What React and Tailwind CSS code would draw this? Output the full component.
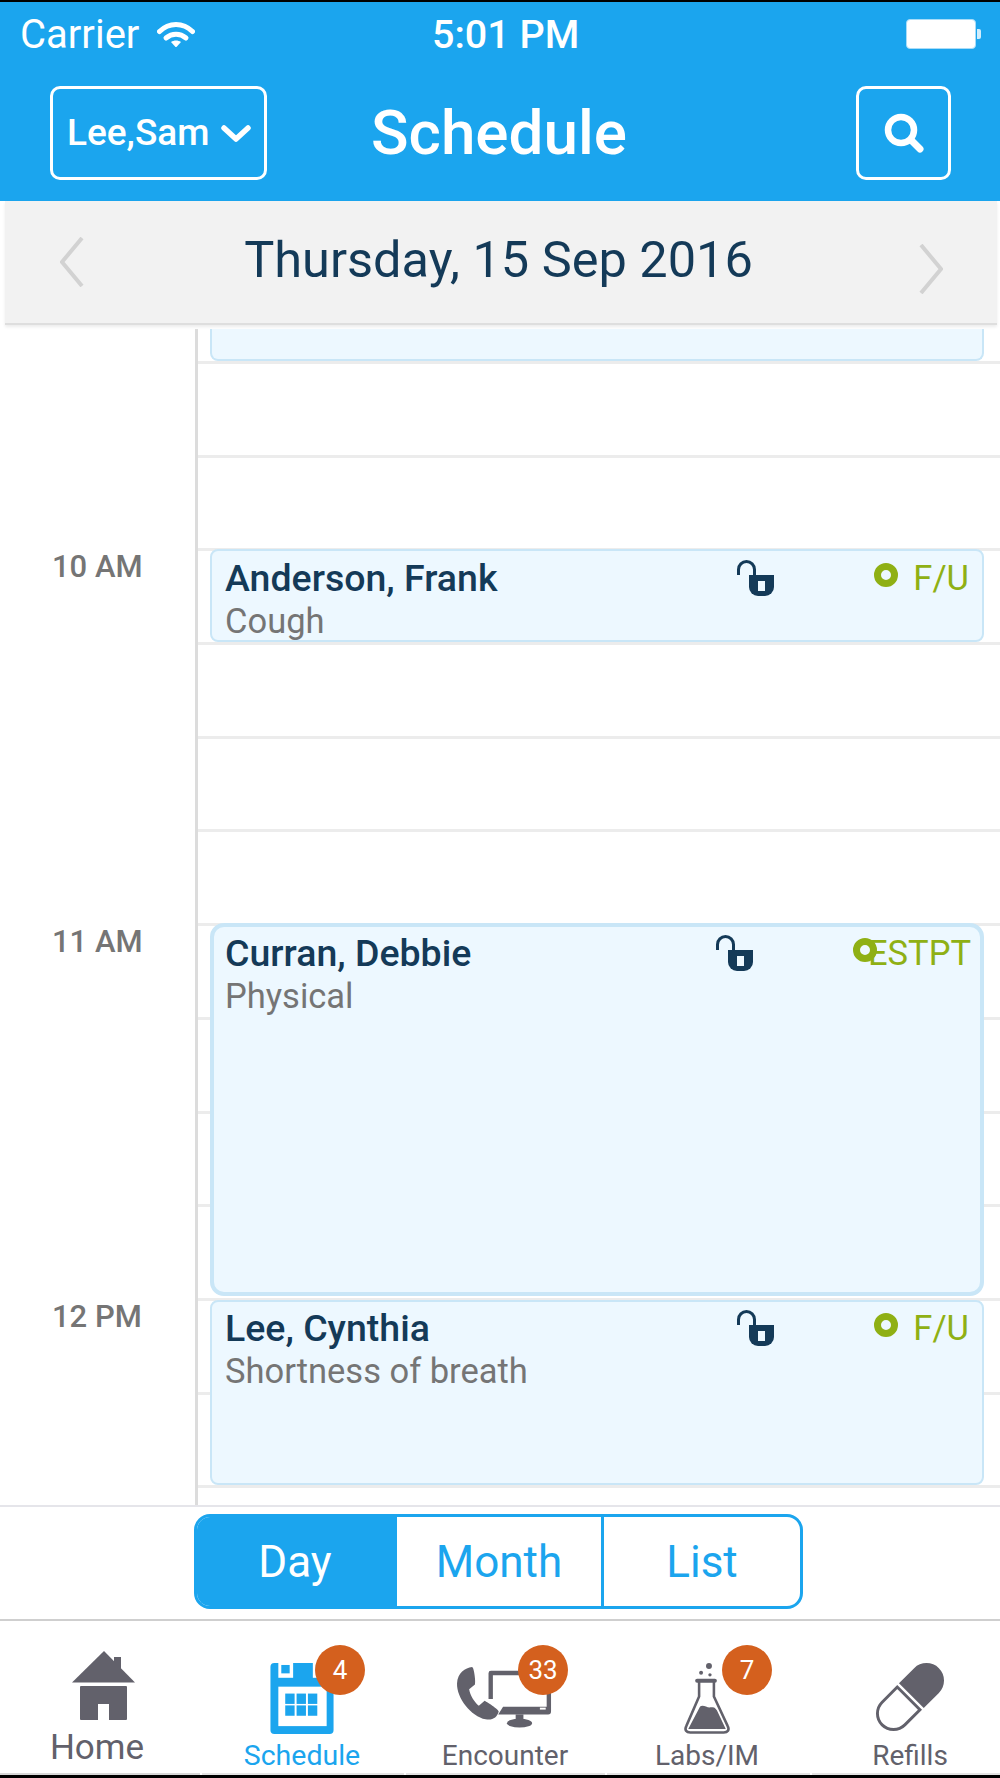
import React from "react";

const GRAY = "#62616b";

function Wifi() {
  return (
    <svg viewBox="157 18 38 28" className="w-[38px] h-[28px] ml-[18px] -mt-[4px]" fill="none">
      <path d="M159.5 30.5C169 21 183 21 192.5 30.5" stroke="#fff" strokeWidth="5" strokeLinecap="round" />
      <path d="M166 37C172 32 180 32 186 37" stroke="#fff" strokeWidth="5" strokeLinecap="round" />
      <path d="M171 41C174 39 178 39 181 41L176 46.5Z" fill="#fff" />
    </svg>
  );
}

function Lock() {
  return (
    <svg viewBox="0 0 37 36" className="w-[37px] h-[36px] shrink-0">
      <path d="M1.5 15V9.5a8 8 0 0 1 16 0V15" fill="none" stroke="#143a58" strokeWidth="3" />
      <path d="M12 15H37V27a9 9 0 0 1-9 9H21a9 9 0 0 1-9-9Z" fill="#143a58" />
      <rect x="21" y="21" width="7" height="10" fill="#edf8ff" />
    </svg>
  );
}

function Card({ name, reason, tag, dotClass, className }) {
  return (
    <div className={"bg-[#edf8ff] border-[#c9e6f7] flex justify-between " + className}>
      <div className="flex flex-col pt-[1px]">
        <div className="text-[#143a58] text-[37.5px] leading-[40px] font-medium">{name}</div>
        <div className="text-[#757575] text-[34.5px] leading-[42px] mt-[2px]">{reason}</div>
      </div>
      <div className="flex items-start">
        <div className="mt-[3px]"><Lock /></div>
        <div className={"ml-[100px] mt-[6px] w-[24px] h-[24px] rounded-full border-[7px] border-[#8fb014] shrink-0 " + dotClass} />
        <div className="text-[#8fb014] text-[34.5px] leading-[40px] mt-[1px] relative">{tag}</div>
      </div>
    </div>
  );
}

function Time({ children }) {
  return (
    <div className="h-[375px] pl-[52px] pt-[1px] text-[#757575] text-[31px] leading-[34px] font-medium">{children}</div>
  );
}

function Badge({ children, className }) {
  return (
    <div className={"absolute top-[24px] w-[50px] h-[50px] rounded-full bg-[#d4601e] text-white text-[26px] flex items-center justify-center " + className}>
      {children}
    </div>
  );
}

function Home() {
  return (
    <svg viewBox="71 1651 63 69" className="w-[63px] h-[69px] ml-[12px]">
      <path d="M103 1651L134 1682.5H71Z" fill={GRAY} />
      <rect x="113" y="1657" width="7" height="14" fill={GRAY} />
      <path d="M80 1686H125a1 1 0 0 1 1 1V1719a1 1 0 0 1-1 1H108V1704H97V1720H80a1 1 0 0 1-1-1V1687a1 1 0 0 1 1-1Z" fill={GRAY} />
    </svg>
  );
}

function CalendarIcon() {
  const c = "#1ba5ee";
  return (
    <svg viewBox="269 1663 64 72" className="w-[64px] h-[72px]">
      <rect x="269" y="1663" width="64" height="72" rx="4" fill={c} />
      <rect x="277" y="1663" width="15" height="15" fill="#fff" />
      <rect x="280" y="1665" width="8.5" height="8.5" fill={c} />
      <rect x="312" y="1663" width="15" height="15" fill="#fff" />
      <rect x="315" y="1665" width="8.5" height="8.5" fill={c} />
      <rect x="277" y="1687" width="49" height="40" fill="#fff" />
      {[284, 295.5, 307].map((x) =>
        [1694, 1706].map((y) => <rect key={x + "-" + y} x={x} y={y} width="9.5" height="10.5" fill={c} />)
      )}
    </svg>
  );
}

function EncounterIcon() {
  return (
    <svg viewBox="455 1665 100 65" className="w-[100px] h-[65px]">
      <path d="M471 1667C464 1668 456 1673 455.5 1684C455 1699 470 1718 485 1721C492 1722.5 497 1719 498.5 1713C498.5 1711 486 1703 484 1702L478 1707C473 1703 469 1696 468 1690L474 1685C475 1682 473 1667 471 1667Z" fill={GRAY} />
      <path d="M488 1700V1673.5a2.5 2.5 0 0 1 2.5-2.5H530V1675.5H492.5V1700Z" fill={GRAY} />
      <path d="M503 1708H548V1692H552.5V1713a3 3 0 0 1-3 3H498Z" fill={GRAY} />
      <rect x="541" y="1709" width="6" height="2" fill="#fff" />
      <rect x="516" y="1716" width="8" height="7" fill={GRAY} />
      <ellipse cx="520" cy="1725" rx="13" ry="4.5" fill={GRAY} />
    </svg>
  );
}

function Flask() {
  return (
    <svg viewBox="682 1660 50 76" className="w-[50px] h-[76px]">
      <circle cx="709" cy="1666" r="3" fill={GRAY} />
      <circle cx="701" cy="1673" r="2" fill={GRAY} />
      <circle cx="710" cy="1675" r="1.7" fill={GRAY} />
      <rect x="695" y="1679" width="22" height="4" rx="2" fill={GRAY} />
      <path d="M699 1682V1697L686 1727C684 1731 686 1733.5 690 1733.5H724C728 1733.5 730 1731 728 1727L714 1697V1682" fill="none" stroke={GRAY} strokeWidth="2.6" />
      <path d="M700 1707C704 1705 707 1709 711 1708C715 1707 716 1710 717 1711L726 1730H688Z" fill={GRAY} />
    </svg>
  );
}

function Pill() {
  return (
    <svg viewBox="874 1662 74 73" className="w-[74px] h-[73px]">
      <g transform="rotate(-45 911 1698)">
        <path d="M909 1681.5H887a16.5 16.5 0 0 0 0 33H909Z" fill="none" stroke={GRAY} strokeWidth="3" />
        <path d="M913 1680H935a18 18 0 0 1 0 36H913Z" fill={GRAY} />
      </g>
    </svg>
  );
}

function Tab({ width, label, labelClass, pt, mt, icon, badge, badgeClass }) {
  return (
    <div className={"relative flex flex-col items-center " + width + " " + pt}>
      {icon}
      <div className={labelClass + " " + mt}>{label}</div>
      {badge && <Badge className={badgeClass}>{badge}</Badge>}
    </div>
  );
}

export default function App() {
  return (
    <div className="w-[1000px] h-[1778px] bg-white overflow-hidden flex flex-col font-['Roboto','Liberation_Sans',sans-serif]">
      <div className="h-[2px] bg-black shrink-0" />
      <header className="h-[199px] bg-[#1ba5ee] text-white shrink-0">
        <div className="h-[62px] relative flex items-center pl-[20px] pr-[19px] pt-[4px]">
          <span className="text-[40px] leading-[42px]">Carrier</span>
          <Wifi />
          <span className="flex-1" />
          <span className="absolute left-[432px] text-[39.5px] leading-[42px] font-medium">5:01 PM</span>
          <div className="w-[70px] h-[30px] -mt-[3px] rounded-[4px] bg-white border border-[#a8dcf8]" />
          <div className="w-[4px] h-[10px] -mt-[3px] ml-[1px] rounded-r-[2px] bg-white/80" />
        </div>
        <div className="mt-[22px] h-[94px] flex items-center pl-[50px] pr-[49px]">
          <button className="w-[217px] h-[94px] rounded-[10px] border-[3px] border-white flex items-center pl-[14px] text-[37px] font-medium">
            <span>Lee,Sam</span>
            <svg viewBox="0 0 30 18" className="w-[30px] h-[18px] ml-[12px] mt-[2px]">
              <path d="M3 3L15 14L27 3" fill="none" stroke="#fff" strokeWidth="5.5" strokeLinecap="round" strokeLinejoin="round" />
            </svg>
          </button>
          <h1 className="ml-[104px] text-[62px] leading-[70px] font-medium">Schedule</h1>
          <button className="ml-auto w-[95px] h-[94px] rounded-[10px] border-[3px] border-white flex items-center justify-center">
            <svg viewBox="0 0 44 44" className="w-[44px] h-[44px]">
              <circle cx="19" cy="19" r="13" fill="none" stroke="#fff" strokeWidth="6.5" />
              <path d="M30 30L38 38" stroke="#fff" strokeWidth="7" strokeLinecap="round" />
            </svg>
          </button>
        </div>
      </header>

      <div className="ml-[5px] mr-[3px] h-[124px] bg-[#f2f2f2] border-b-2 border-[#dedede] shadow-[0_2px_3px_rgba(0,0,0,0.08)] flex items-start justify-between pl-[55px] pr-[54px] shrink-0">
        <svg viewBox="0 0 24 50" className="w-[24px] h-[50px] mt-[36px]">
          <path d="M22 1L2 25L22 49" fill="none" stroke="#d2d2d2" strokeWidth="4" />
        </svg>
        <div className="text-[#143a58] text-[50.5px] leading-[58px] mt-[30px] mr-[6px]">Thursday, 15 Sep 2016</div>
        <svg viewBox="0 0 24 50" className="w-[24px] h-[50px] mt-[43px]">
          <path d="M2 1L22 25L2 49" fill="none" stroke="#d2d2d2" strokeWidth="4" />
        </svg>
      </div>

      <div className="h-[4px] shrink-0" />

      <main className="h-[1176px] flex shrink-0 overflow-hidden">
        <div className="w-[195px] shrink-0 pt-[220px]">
          <Time>10 AM</Time>
          <Time>11 AM</Time>
          <Time>12 PM</Time>
        </div>
        <div className="relative flex-1 border-l-[3px] border-[#dcdcdc]">
          <div className="h-[35px] border-b-[3px] border-[#ececec]" />
          {Array.from({ length: 12 }).map((_, i) => (
            <div key={i} className="h-[93.7px] border-b-[3px] border-[#ececec]" />
          ))}
          <div className="absolute left-[12px] w-[774px] top-0 h-[32px] rounded-b-[8px] bg-[#edf8ff] border-2 border-t-0 border-[#c9e6f7]" />
          <div className="absolute left-[12px] w-[774px] top-[220px]">
            <Card className="h-[93px] border-2 rounded-[8px] pt-[6px] pl-[13px] pr-[13px]" name="Anderson, Frank" reason="Cough" tag="F/U" dotClass="mr-[15px]" />
          </div>
          <div className="absolute left-[12px] w-[774px] top-[594px]">
            <Card className="h-[373px] border-[4px] rounded-[14px] pt-[5px] pl-[11px] pr-[9px]" name="Curran, Debbie" reason="Physical" tag="ESTPT" dotClass="-mr-[9px]" />
          </div>
          <div className="absolute left-[12px] w-[774px] top-[971px]">
            <Card className="h-[185px] border-2 rounded-[8px] pt-[5px] pl-[13px] pr-[13px]" name="Lee, Cynthia" reason="Shortness of breath" tag="F/U" dotClass="mr-[15px]" />
          </div>
        </div>
      </main>

      <div className="h-[114px] border-t-2 border-[#e5e5ea] pt-[7px] pl-[194px] shrink-0">
        <div className="w-[609px] h-[95px] rounded-[16px] border-[3px] border-[#1ba5ee] flex text-[44px] overflow-hidden">
          <div className="w-[200px] pr-[4px] bg-[#1ba5ee] text-white flex items-center justify-center">Day</div>
          <div className="w-[207px] border-r-[3px] border-[#1ba5ee] text-[#1ba5ee] flex items-center justify-center">Month</div>
          <div className="flex-1 text-[#1ba5ee] flex items-center justify-center">List</div>
        </div>
      </div>

      <nav className="h-[154px] border-t-2 border-[#cfcfcf] flex shrink-0">
        <Tab width="w-[194px]" pt="pt-[30px]" mt="mt-[8px]" label="Home" labelClass="text-[35px] leading-[40px] text-[#62616b]" icon={<Home />} />
        <Tab width="w-[216px]" pt="pt-[42px]" mt="mt-[5px]" label="Schedule" labelClass="text-[28.5px] leading-[34px] text-[#1ba5ee]" icon={<CalendarIcon />} badge="4" badgeClass="left-[121px]" />
        <Tab width="w-[190px]" pt="pt-[44px]" mt="mt-[11px]" label="Encounter" labelClass="text-[28px] leading-[34px] text-[#62616b]" icon={<EncounterIcon />} badge="33" badgeClass="left-[108px]" />
        <Tab width="w-[214px]" pt="pt-[39px]" mt="mt-[4px]" label="Labs/IM" labelClass="text-[28px] leading-[34px] text-[#62616b]" icon={<Flask />} badge="7" badgeClass="left-[122px]" />
        <Tab width="w-[186px] pl-[6px]" pt="pt-[41px]" mt="mt-[6px]" label="Refills" labelClass="text-[28px] leading-[34px] text-[#62616b]" icon={<Pill />} />
      </nav>

      <div className="h-[2px] flex gap-[2px] shrink-0">
        <div className="w-[200px] bg-[#d8d8d8]" />
        <div className="w-[202px] bg-[#e4e4e4]" />
        <div className="w-[199px] bg-[#e4e4e4]" />
        <div className="w-[203px] bg-[#e4e4e4]" />
        <div className="flex-1 bg-[#e4e4e4]" />
      </div>
      <div className="flex-1 bg-black" />
    </div>
  );
}
